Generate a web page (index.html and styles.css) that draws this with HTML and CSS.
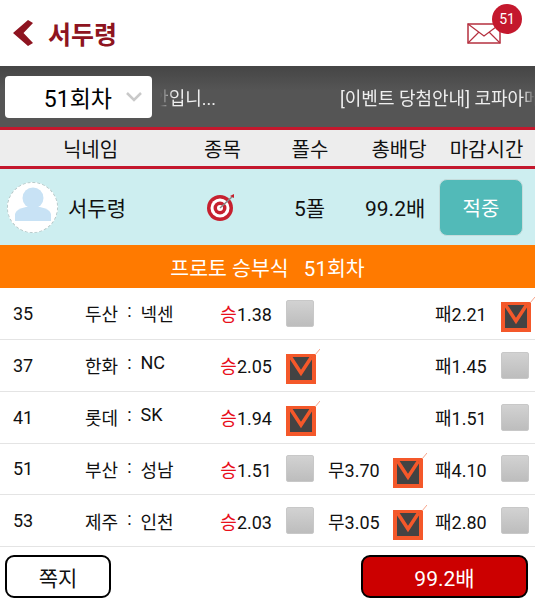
FILE: index.html
```html
<!DOCTYPE html>
<html lang="ko">
<head>
<meta charset="UTF-8" />
<meta name="viewport" content="width=device-width, initial-scale=1" />
<title>서두령</title>
<link rel="stylesheet" href="styles.css">
</head>
<body>

<svg class="defs" width="0" height="0">
  <symbol id="checked" viewBox="0 0 34 35">
    <rect x="0" y="5" width="30" height="30" fill="#f4582a"/>
    <rect x="4" y="8" width="22" height="23" fill="#434343"/>
    <path d="M4.500 8 L15 24 L25.500 8" fill="none" stroke="#f4582a" stroke-width="3.500"/>
    <path d="M29 6 L34 0" fill="none" stroke="#f8a48a" stroke-width="1"/>
  </symbol>
</svg>

<div class="page">
  <header class="top">
    <div class="title">
      <svg class="back" width="20" height="26" viewBox="0 0 20 26"><path d="M15 0 L20 3 L10.500 13 L20 23 L15 26 L0 13 Z" fill="#8e1420"/></svg>
      <h1>서두령</h1>
    </div>
    <div class="mail">
      <svg width="34" height="21" viewBox="0 0 34 21"><rect x="1" y="1" width="32" height="19" fill="#fff" stroke="#b5303f" stroke-width="1.500"/><path d="M1 1 L17 13 L33 1 M1 20 L12 9 M33 20 L22 9" fill="none" stroke="#b5303f" stroke-width="1.200"/></svg>
      <span class="badge">51</span>
    </div>
  </header>

  <div class="ticker-bar">
    <div class="round-select">
      <span>51회차</span>
      <svg width="16" height="10" viewBox="0 0 16 10"><path d="M1 1 L8 8 L15 1" fill="none" stroke="#c9c9c9" stroke-width="2.500"/></svg>
    </div>
    <div class="ticker">
      <div class="ticker-end"><span>안입니...</span></div>
      <div class="ticker-start">[이벤트 당첨안내] 코파아메리카</div>
    </div>
  </div>

  <div class="columns">
    <span class="col-name">닉네임</span>
    <span class="col-kind">종목</span>
    <span class="col-fold">폴수</span>
    <span class="col-odds">총배당</span>
    <span class="col-time">마감시간</span>
  </div>

  <div class="profile">
    <div class="avatar">
      <svg width="36" height="34" viewBox="0 0 36 34"><circle cx="18" cy="11" r="10.500" fill="#c8e2f5"/><path d="M0 34 V27 Q1 22 11 20 H25 Q35 22 36 27 V34 Z" fill="#c8e2f5"/></svg>
    </div>
    <span class="profile-name">서두령</span>
    <svg class="target" width="28" height="28" viewBox="0 0 28 28">
      <circle cx="13" cy="15" r="13" fill="#c6202f"/>
      <circle cx="13" cy="15" r="9.500" fill="#fff"/>
      <circle cx="13" cy="15" r="6.500" fill="#c6202f"/>
      <circle cx="13" cy="15" r="3" fill="#fff"/>
      <path d="M13 15 L26 3" stroke="#888" stroke-width="1.500"/>
      <path d="M23 3 L27 1 L27 5 Z" fill="#c6202f"/>
    </svg>
    <span class="profile-fold">5폴</span>
    <span class="profile-odds">99.2배</span>
    <button class="hit">적중</button>
  </div>

  <div class="banner">프로토 승부식&nbsp;&nbsp; 51회차</div>

  <div class="game">
    <span class="no">35</span>
    <span class="teams"><span>두산</span><i>:</i><span>넥센</span></span>
    <span class="win"><b>승</b>1.38</span><span class="box"></span>
    <span class="draw"></span><span></span>
    <span class="lose">패2.21</span><svg class="tick"><use href="#checked"/></svg>
  </div>
  <div class="game">
    <span class="no">37</span>
    <span class="teams"><span>한화</span><i>:</i><span>NC</span></span>
    <span class="win"><b>승</b>2.05</span><svg class="tick"><use href="#checked"/></svg>
    <span class="draw"></span><span></span>
    <span class="lose">패1.45</span><span class="box"></span>
  </div>
  <div class="game">
    <span class="no">41</span>
    <span class="teams"><span>롯데</span><i>:</i><span>SK</span></span>
    <span class="win"><b>승</b>1.94</span><svg class="tick"><use href="#checked"/></svg>
    <span class="draw"></span><span></span>
    <span class="lose">패1.51</span><span class="box"></span>
  </div>
  <div class="game">
    <span class="no">51</span>
    <span class="teams"><span>부산</span><i>:</i><span>성남</span></span>
    <span class="win"><b>승</b>1.51</span><span class="box"></span>
    <span class="draw">무3.70</span><svg class="tick"><use href="#checked"/></svg>
    <span class="lose">패4.10</span><span class="box"></span>
  </div>
  <div class="game">
    <span class="no">53</span>
    <span class="teams"><span>제주</span><i>:</i><span>인천</span></span>
    <span class="win"><b>승</b>2.03</span><span class="box"></span>
    <span class="draw">무3.05</span><svg class="tick"><use href="#checked"/></svg>
    <span class="lose">패2.80</span><span class="box"></span>
  </div>

  <footer class="bottom">
    <button class="note">쪽지</button>
    <button class="total">99.2배</button>
  </footer>
</div>

</body>
</html>
```

FILE: styles.css
```css
body {
  margin: 0;
  background-color: #fff;
  font-family: Roboto, "Noto Sans CJK KR", sans-serif;
  color: #111;
}
.defs {
  display: block;
  height: 0;
}
.page {
  width: 535px;
}
.top {
  height: 66px;
  display: flex;
  align-items: center;
  justify-content: space-between;
  padding: 0 13px;
  box-sizing: border-box;
}
.title {
  display: flex;
  align-items: center;
  gap: 15px;
}
.title h1 {
  margin: 0;
  font-size: 25px;
  font-weight: 700;
  color: #8e1420;
}
.mail {
  position: relative;
  width: 34px;
  height: 21px;
  margin-right: 21px;
}
.mail svg {
  display: block;
}
.badge {
  position: absolute;
  left: 25px;
  top: -19px;
  width: 30px;
  height: 30px;
  border-radius: 50%;
  background-color: #c4182d;
  color: #fff;
  font-size: 14px;
  line-height: 30px;
  text-align: center;
}
.ticker-bar {
  height: 64px;
  display: flex;
  align-items: center;
  gap: 8px;
  padding-left: 5px;
  box-sizing: border-box;
  background: linear-gradient(#454545, #555 40%);
  border-bottom: 3px solid #c4182d;
}
.round-select {
  width: 147px;
  height: 42px;
  flex: none;
  display: flex;
  align-items: center;
  justify-content: flex-end;
  gap: 10px;
  padding-right: 10px;
  box-sizing: border-box;
  background-color: #fff;
  border-radius: 4px;
  font-size: 23px;
  color: #000;
}
.round-select span {
  margin-right: 4px;
}
.ticker {
  flex: 1;
  min-width: 0;
  display: flex;
  justify-content: space-between;
  color: #eee;
  font-size: 18px;
}
.ticker-end {
  width: 56px;
  display: flex;
  justify-content: flex-end;
  white-space: nowrap;
  overflow: hidden;
  -webkit-mask-image: linear-gradient(to right, transparent, #000 14px);
  mask-image: linear-gradient(to right, transparent, #000 14px);
}
.ticker-start {
  width: 195px;
  white-space: nowrap;
  overflow: hidden;
  -webkit-mask-image: linear-gradient(to left, transparent, #000 12px);
  mask-image: linear-gradient(to left, transparent, #000 12px);
}
.columns {
  height: 36px;
  display: flex;
  align-items: center;
  background-color: #ededed;
  border-bottom: 3px solid #c4182d;
  font-size: 20px;
  color: #111;
}
.columns span {
  text-align: center;
}
.col-name { width: 181px; }
.col-kind { width: 83px; }
.col-fold { width: 92px; }
.col-odds { width: 86px; }
.col-time { width: 89px; }
.profile {
  height: 76px;
  display: flex;
  align-items: center;
  background-color: #cdeef0;
  font-size: 21px;
}
.avatar {
  width: 51px;
  height: 51px;
  margin-left: 7px;
  flex: none;
  display: flex;
  align-items: flex-end;
  justify-content: center;
  box-sizing: border-box;
  padding-bottom: 11px;
  background-color: #fff;
  border-radius: 50%;
  border: 1px dashed #b8c8c8;
}
.profile-name {
  width: 139px;
  margin-left: 10px;
}
.target {
  flex: none;
}
.profile-fold {
  width: 32px;
  margin-left: 59px;
}
.profile-odds {
  width: 61px;
  margin-left: 39px;
}
.hit {
  width: 84px;
  height: 57px;
  margin-left: 13px;
  border: 1px solid #c5dcdc;
  border-radius: 8px;
  background-color: #52bab8;
  color: #fff;
  font: inherit;
  font-size: 20px;
  padding: 0;
}
.banner {
  height: 43px;
  display: flex;
  align-items: center;
  justify-content: center;
  background-color: #ff7a00;
  color: #fff;
  font-size: 20.500px;
}
.game {
  height: 51.850px;
  display: grid;
  grid-template-columns: 72px 122px 79px 30px 12px 65px 30px 12px 66px 30px;
  align-items: center;
  padding-left: 13px;
  box-sizing: border-box;
  border-bottom: 1px solid #e4e4e4;
  font-size: 18px;
  color: #111;
}
.teams {
  display: flex;
  gap: 9px;
}
.teams i {
  font-style: normal;
}
.win {
  text-align: right;
  padding-right: 14px;
}
.win b {
  font-weight: 400;
  color: #e8101c;
}
.draw {
  grid-column: 6;
}
.lose {
  grid-column: 9;
}
.box {
  width: 28px;
  height: 27px;
  box-sizing: border-box;
  border-radius: 2px;
  border: 1px solid #c8c8c8;
  background: linear-gradient(#d2d2d2, #bdbdbd);
}
.tick {
  width: 34px;
  height: 35px;
  margin-top: 3px;
}
.bottom {
  display: flex;
  justify-content: space-between;
  padding: 8px 7px 0 5px;
}
.note,
.total {
  height: 43px;
  box-sizing: border-box;
  border: 2px solid #000;
  border-radius: 9px;
  font: inherit;
  font-size: 21px;
  padding: 0;
}
.note {
  width: 106px;
  background-color: #fff;
  color: #111;
}
.total {
  width: 167px;
  background-color: #cc0000;
  color: #fff;
}
```
